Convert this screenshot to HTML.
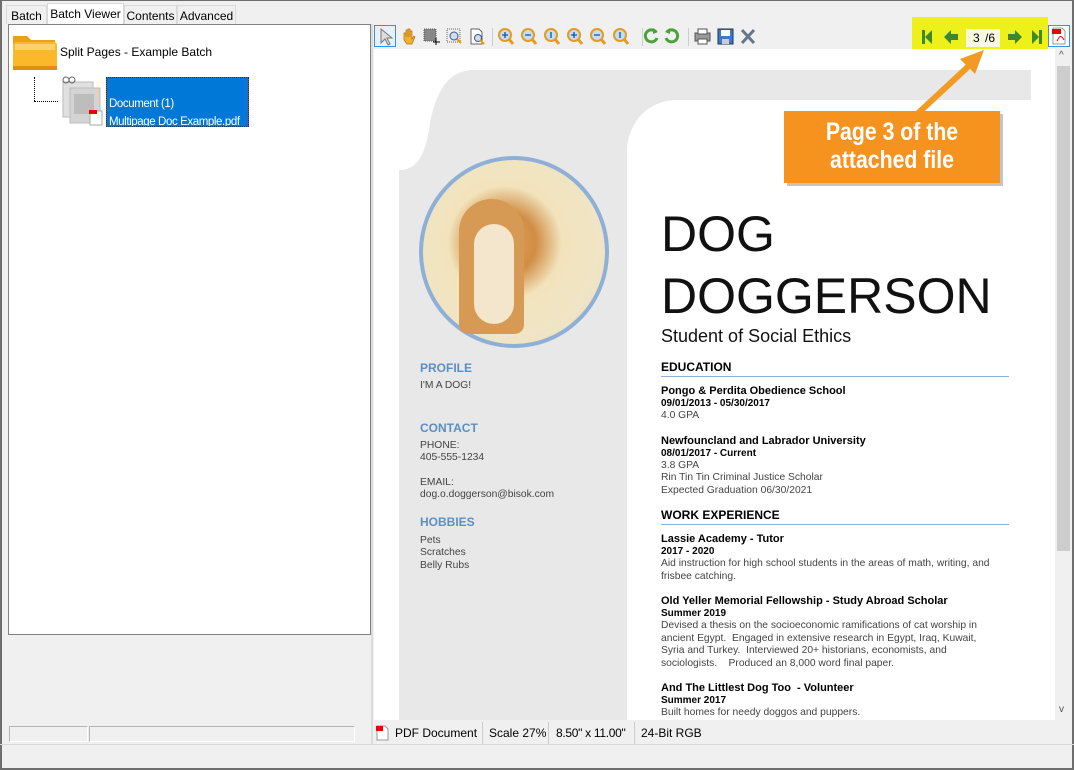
<!DOCTYPE html>
<html><head><meta charset="utf-8"><style>
*{margin:0;padding:0;box-sizing:border-box}
body{width:1074px;height:770px;background:#f0f0f0;font-family:"Liberation Sans",sans-serif;position:relative;overflow:hidden;font-size:12px;color:#000}
.a{position:absolute}
.tab{position:absolute;top:5px;height:19px;border:1px solid #d9d9d9;border-bottom:none;background:#f0f0f0;font-size:12px;padding:3px 0 0;text-align:center;white-space:nowrap}
.doc{font-family:"Liberation Sans",sans-serif;color:#333}
.h{font-weight:bold;color:#000;font-size:11px;line-height:13px}
.t{font-size:10.3px;line-height:12.5px;color:#444;width:335px}
.blue{color:#5b8fc4;font-weight:bold;font-size:12px}
.st{position:absolute;top:726px;font-size:12px;white-space:nowrap}
</style></head><body>
<div class="a" style="left:0;top:0;width:1074px;height:770px;border:2px solid #6e6e6e;border-top:1px solid #6e6e6e"></div>
<!-- tabs -->
<div class="tab" style="left:6px;width:41px">Batch</div>
<div class="tab" style="left:47px;top:3px;height:22px;width:77px;background:#fff;padding-top:3px">Batch Viewer</div>
<div class="tab" style="left:124px;width:53px">Contents</div>
<div class="tab" style="left:177px;width:59px">Advanced</div>
<!-- left tree panel -->
<div class="a" style="left:8px;top:24px;width:363px;height:611px;background:#fff;border:1px solid #828282"></div>
<svg class="a" style="left:10px;top:30px" width="50" height="42"><path d="M3 6h14l4 4h24v6H3z" fill="#e8a21a"/><rect x="3" y="12" width="44" height="28" rx="3" fill="#fbb829"/><rect x="5" y="14" width="40" height="6" fill="#fcd36a"/><rect x="3" y="36" width="44" height="4" fill="#e08e10"/></svg>
<div class="a" style="left:60px;top:45px;font-size:12px">Split Pages - Example Batch</div>
<div class="a" style="left:34px;top:77px;width:1px;height:24px;border-left:1px dotted #000"></div>
<div class="a" style="left:34px;top:101px;width:24px;border-top:1px dotted #000"></div>
<svg class="a" style="left:58px;top:76px" width="50" height="50"><rect x="5" y="6" width="30" height="35" fill="#e0e0e0" stroke="#bbb"/><rect x="12" y="12" width="30" height="35" fill="#d4d4d4" stroke="#bbb"/><rect x="16" y="18" width="20" height="20" fill="#bdbdbd"/><rect x="32" y="35" width="12" height="14" fill="#fff" stroke="#aaa"/><rect x="31" y="34" width="8" height="4" fill="#e00"/><circle cx="8" cy="4" r="3" fill="none" stroke="#666"/><circle cx="14" cy="4" r="3" fill="none" stroke="#666"/></svg>
<div class="a" style="left:106px;top:77px;width:143px;height:50px;background:#0078d7;border:1px dotted #333;color:#fff;font-size:11.5px;padding:17px 0 0 2px;line-height:18px;white-space:nowrap;overflow:hidden;letter-spacing:-0.4px">Document (1)<br>Multipage Doc Example.pdf</div>
<!-- left bottom status -->
<div class="a" style="left:9px;top:726px;width:79px;height:16px;border:1px solid #b5b5b5;border-right-color:#fff;border-bottom-color:#fff"></div>
<div class="a" style="left:89px;top:726px;width:266px;height:16px;border:1px solid #b5b5b5;border-right-color:#fff;border-bottom-color:#fff"></div>
<div class="a" style="left:0;top:744px;width:1074px;height:1px;background:#d8d8d8"></div>
<div class="a" style="left:371px;top:24px;width:2px;height:720px;background:#dcdcdc"></div>
<!-- toolbar -->
<div class="a" style="left:912px;top:17px;width:136px;height:42px;background:#eef01a"></div>
<div class="a" style="left:374px;top:25px;width:22px;height:22px;border:1px solid #3c8ee0;background:#e8f1fb"></div>
<svg class="a" style="left:378px;top:28px" width="16" height="18"><path d="M3 1v14l4-4 3 6 2-1-3-6h5z" fill="#ddd" stroke="#777"/></svg>
<svg class="a" style="left:401px;top:28px" width="16" height="18"><path d="M3 9V5h2v4V2h2v7V1h2v8V3h2v8l2-3 1 1-3 7H6L3 12z" fill="#f0b030" stroke="#b07010" stroke-width=".7"/></svg>
<svg class="a" style="left:423px;top:28px" width="18" height="18"><rect x="1" y="1" width="12" height="12" fill="#888" stroke="#555" stroke-dasharray="1 1"/><path d="M13 10v7M10 14h7" stroke="#000"/></svg>
<svg class="a" style="left:446px;top:28px" width="18" height="18"><rect x="1" y="1" width="13" height="13" fill="#eee" stroke="#666" stroke-dasharray="1 1"/><circle cx="8" cy="8" r="4" fill="#cde" stroke="#458"/><path d="M11 11l4 4" stroke="#e90" stroke-width="2"/></svg>
<svg class="a" style="left:469px;top:28px" width="18" height="18"><path d="M2 1h8l3 3v12H2z" fill="#fff" stroke="#666"/><circle cx="9" cy="10" r="3.5" fill="#cde" stroke="#458"/><path d="M11 12l4 4" stroke="#e90" stroke-width="2"/></svg>
<div class="a" style="left:492px;top:28px;width:1px;height:18px;background:#ccc"></div>
<svg class="a" style="left:496px;top:27px" width="150" height="20"><g fill="#bfe0f8" stroke="#e79a1e" stroke-width="2"><circle cx="9" cy="8" r="6"/><circle cx="32" cy="8" r="6"/><circle cx="55" cy="8" r="6"/><circle cx="78" cy="8" r="6"/><circle cx="101" cy="8" r="6"/><circle cx="124" cy="8" r="6"/></g><g stroke="#e79a1e" stroke-width="3"><path d="M13 12l4 5M36 12l4 5M59 12l4 5M82 12l4 5M105 12l4 5M128 12l4 5"/></g><g stroke="#1c4e9a" stroke-width="1.3" fill="none"><path d="M6 8h6M9 5v6M29 8h6M55 5v6M75 8h6M78 5v6M98 8h6M124 5v6"/></g></svg>
<div class="a" style="left:642px;top:28px;width:1px;height:18px;background:#ccc"></div>
<svg class="a" style="left:643px;top:27px" width="40" height="20"><g fill="none" stroke="#4aa23a" stroke-width="3"><path d="M13 5a6 6 0 1 0 1 6"/><path d="M24 5a6 6 0 1 1-1 6"/></g><path d="M10 1l5 4-5 2zM27 1l-5 4 5 2z" fill="#4aa23a"/></svg>
<div class="a" style="left:688px;top:28px;width:1px;height:18px;background:#ccc"></div>
<svg class="a" style="left:693px;top:27px" width="70" height="20"><rect x="2" y="6" width="15" height="8" fill="#999" stroke="#555"/><rect x="5" y="2" width="9" height="5" fill="#fff" stroke="#555"/><rect x="5" y="12" width="9" height="5" fill="#fff" stroke="#555"/><rect x="25" y="2" width="15" height="15" fill="#3f78c4" stroke="#234"/><rect x="28" y="3" width="9" height="6" fill="#fff"/><rect x="29" y="12" width="7" height="5" fill="#ccd"/><path d="M49 3l12 13M61 3L49 16" stroke="#678" stroke-width="3"/></svg>
<!-- nav -->
<svg class="a" style="left:920px;top:28px" width="125" height="20"><g fill="#3a8a2a"><path d="M2 2h3v14H2zM5 9l7-7v14z"/><path d="M24 9l7-7v4h7v6h-7v4z"/><path d="M102 9l-7-7v4h-7v6h7v4z"/><path d="M122 2h-3v14h3zM119 9l-7-7v14z"/></g></svg>
<div class="a" style="left:966px;top:29px;width:34px;height:18px;background:#f8f8e0"></div>
<div class="a" style="left:973px;top:31px;font-size:12px">3</div>
<div class="a" style="left:985px;top:31px;font-size:12px">/6</div>
<div class="a" style="left:1048px;top:25px;width:22px;height:22px;border:1px solid #3c8ee0;background:#fff"></div>
<svg class="a" style="left:1051px;top:27px" width="16" height="18"><path d="M2 1h9l3 3v13H2z" fill="#fff" stroke="#999"/><rect x="1" y="2" width="9" height="5" fill="#e00"/><path d="M6 14c3-6 4-6 7-1" stroke="#e00" fill="none"/></svg>
<!-- viewer -->
<div class="a" style="left:374px;top:49px;width:681px;height:671px;background:#fff;overflow:hidden">
<svg class="a" style="left:0;top:0" width="681" height="671"><path d="M25 671V121c15 0 25-10 30-40c6-40 20-60 45-60H657V51H303c-28 0-50 22-50 52V671z" fill="#e8e8e8"/></svg>
<div class="a" style="left:45px;top:107px;width:190px;height:192px;border-radius:50%;border:4px solid #8fb0d6;background:radial-gradient(circle at 45% 45%,#e2a15a 0,#d08e45 22%,#f2e3bc 40%,#efe5c6 70%,#d8c48a 100%)"></div>
<div class="a" style="left:85px;top:150px;width:65px;height:135px;border-radius:35px 35px 10px 10px;background:#d69a55"></div>
<div class="a" style="left:100px;top:175px;width:40px;height:100px;border-radius:20px;background:#f3e6cc"></div>
<div class="a doc" style="left:287px;top:154px;font-size:50px;line-height:62px;color:#111;white-space:nowrap">DOG<br>DOGGERSON</div>
<div class="a doc" style="left:287px;top:277px;font-size:18px;color:#111">Student of Social Ethics</div>
<div class="a doc" style="left:46px;top:312px"><div class="blue">PROFILE</div><div class="t" style="margin-top:5px">I'M A DOG!</div>
<div class="blue" style="margin-top:28px">CONTACT</div><div class="t" style="margin-top:5px">PHONE:<br>405-555-1234</div><div class="t" style="margin-top:12px">EMAIL:<br>dog.o.doggerson@bisok.com</div>
<div class="blue" style="margin-top:13px">HOBBIES</div><div class="t" style="margin-top:6px">Pets<br>Scratches<br>Belly Rubs</div></div>
<div class="a doc" style="left:287px;top:312px;width:348px">
<div class="h" style="font-size:12px;border-bottom:1px solid #8fb0d6;padding-bottom:2px">EDUCATION</div>
<div class="h" style="margin-top:8px">Pongo &amp; Perdita Obedience School</div><div class="h" style="font-size:10px;line-height:12px">09/01/2013 - 05/30/2017</div><div class="t">4.0 GPA</div>
<div class="h" style="margin-top:12px">Newfouncland and Labrador University</div><div class="h" style="font-size:10px;line-height:12px">08/01/2017 - Current</div><div class="t">3.8 GPA<br>Rin Tin Tin Criminal Justice Scholar<br>Expected Graduation 06/30/2021</div>
<div class="h" style="font-size:12px;border-bottom:1px solid #8fb0d6;padding-bottom:2px;margin-top:12px">WORK EXPERIENCE</div>
<div class="h" style="margin-top:8px">Lassie Academy - Tutor</div><div class="h" style="font-size:10px;line-height:12px">2017 - 2020</div><div class="t">Aid instruction for high school students in the areas of math, writing, and frisbee catching.</div>
<div class="h" style="margin-top:12px">Old Yeller Memorial Fellowship - Study Abroad Scholar</div><div class="h" style="font-size:10px;line-height:12px">Summer 2019</div><div class="t">Devised a thesis on the socioeconomic ramifications of cat worship in ancient Egypt.&nbsp; Engaged in extensive research in Egypt, Iraq, Kuwait, Syria and Turkey.&nbsp; Interviewed 20+ historians, economists, and sociologists.&nbsp;&nbsp;&nbsp; Produced an 8,000 word final paper.</div>
<div class="h" style="margin-top:12px">And The Littlest Dog Too&nbsp; - Volunteer</div><div class="h" style="font-size:10px;line-height:12px">Summer 2017</div><div class="t">Built homes for needy doggos and puppers.</div>
</div>
</div>
<!-- scrollbar -->
<div class="a" style="left:1055px;top:49px;width:17px;height:671px;background:#f0f0f0"></div>
<div class="a" style="left:1057px;top:66px;width:13px;height:485px;background:#cdcdcd"></div>
<div class="a" style="left:1059px;top:50px;font-size:10px;color:#555">^</div>
<div class="a" style="left:1059px;top:704px;font-size:10px;color:#555">v</div>
<!-- callout -->
<svg class="a" style="left:900px;top:45px" width="100" height="75"><path d="M14 72L72 18" stroke="#f39a25" stroke-width="6"/><path d="M84 5L60 14l15 15z" fill="#f39a25"/></svg>
<div class="a" style="left:787px;top:114px;width:216px;height:72px;background:#8a8a8a;opacity:.5"></div>
<div class="a" style="left:784px;top:111px;width:216px;height:72px;background:#f6921e"></div>
<div class="a" style="left:784px;top:118px;width:216px;color:#fff;font-weight:bold;font-size:25px;line-height:28px;text-align:center;transform:scaleX(.85)">Page 3 of the<br>attached file</div>
<!-- status right -->
<svg class="a" style="left:376px;top:725px" width="14" height="16"><path d="M1 1h8l3 3v11H1z" fill="#fff" stroke="#999"/><rect x="0" y="1" width="7" height="5" fill="#e00"/></svg>
<div class="st" style="left:395px">PDF Document</div>
<div class="a" style="left:482px;top:722px;width:1px;height:22px;background:#ccc"></div>
<div class="st" style="left:489px">Scale 27%</div>
<div class="a" style="left:548px;top:722px;width:1px;height:22px;background:#ccc"></div>
<div class="st" style="left:556px;letter-spacing:-0.3px">8.50" x 11.00"</div>
<div class="a" style="left:634px;top:722px;width:1px;height:22px;background:#ccc"></div>
<div class="st" style="left:641px">24-Bit RGB</div>
</body></html>
